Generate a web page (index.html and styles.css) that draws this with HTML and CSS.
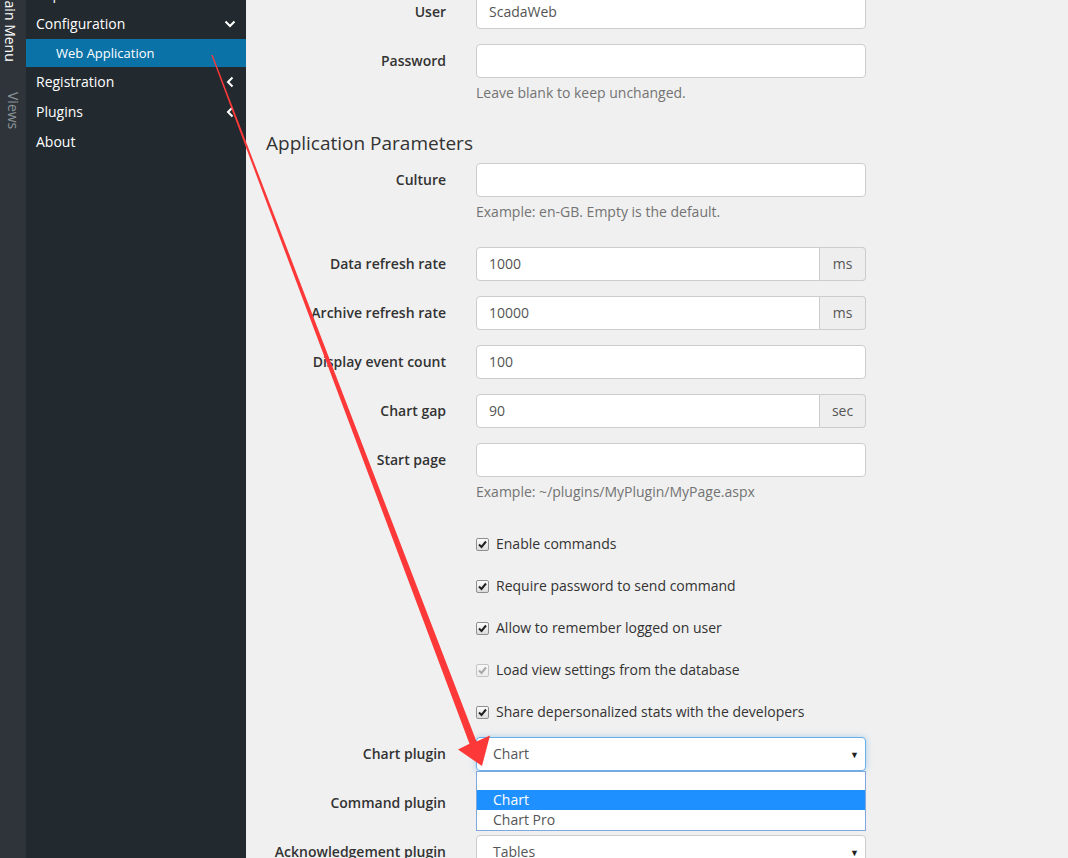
FILE: index.html
```html
<!DOCTYPE html>
<html>
<head>
<meta charset="utf-8">
<link rel="stylesheet" href="styles.css">
</head>
<body>
<div class="page">
  <div class="strip">
    <div class="strip-inner">
      <div class="tab tab-main">Main Menu</div>
      <div class="tab tab-views">Views</div>
    </div>
  </div>
  <nav class="sidebar">
    <ul class="menu">
      <li class="item">Reports</li>
      <li class="item">Configuration
        <svg class="chev" width="12" height="12" viewBox="0 0 12 12"><path d="M1.5 3.5 L6 8 L10.5 3.5" fill="none" stroke="#fff" stroke-width="2"/></svg>
      </li>
      <li class="sub active">Web Application</li>
      <li class="item">Registration
        <svg class="chev" width="12" height="12" viewBox="0 0 12 12"><path d="M8.5 1.5 L4 6 L8.5 10.5" fill="none" stroke="#fff" stroke-width="2"/></svg>
      </li>
      <li class="item">Plugins
        <svg class="chev" width="12" height="12" viewBox="0 0 12 12"><path d="M8.5 1.5 L4 6 L8.5 10.5" fill="none" stroke="#fff" stroke-width="2"/></svg>
      </li>
      <li class="item">About</li>
    </ul>
  </nav>
  <main class="main">
    <form class="form">
      <div class="group">
        <label class="label">User</label>
        <div class="control"><div class="input">ScadaWeb</div></div>
      </div>
      <div class="group">
        <label class="label">Password</label>
        <div class="control"><div class="input"></div><div class="help">Leave blank to keep unchanged.</div></div>
      </div>

      <h3 class="heading">Application Parameters</h3>

      <div class="group">
        <label class="label">Culture</label>
        <div class="control"><div class="input"></div><div class="help">Example: en-GB. Empty is the default.</div></div>
      </div>
      <div class="group">
        <label class="label">Data refresh rate</label>
        <div class="control"><div class="input-group"><div class="input grp">1000</div><div class="addon">ms</div></div></div>
      </div>
      <div class="group">
        <label class="label">Archive refresh rate</label>
        <div class="control"><div class="input-group"><div class="input grp">10000</div><div class="addon">ms</div></div></div>
      </div>
      <div class="group">
        <label class="label">Display event count</label>
        <div class="control"><div class="input">100</div></div>
      </div>
      <div class="group">
        <label class="label">Chart gap</label>
        <div class="control"><div class="input-group"><div class="input grp">90</div><div class="addon">sec</div></div></div>
      </div>
      <div class="group">
        <label class="label">Start page</label>
        <div class="control"><div class="input"></div><div class="help">Example: ~/plugins/MyPlugin/MyPage.aspx</div></div>
      </div>

      <div class="check-row">
        <span class="cb"><svg width="13" height="13" viewBox="0 0 13 13"><path d="M3 6.5 L5.5 9 L10 3.5" fill="none" stroke="#222" stroke-width="2"/></svg></span>
        <span>Enable commands</span>
      </div>
      <div class="check-row">
        <span class="cb"><svg width="13" height="13" viewBox="0 0 13 13"><path d="M3 6.5 L5.5 9 L10 3.5" fill="none" stroke="#222" stroke-width="2"/></svg></span>
        <span>Require password to send command</span>
      </div>
      <div class="check-row">
        <span class="cb"><svg width="13" height="13" viewBox="0 0 13 13"><path d="M3 6.5 L5.5 9 L10 3.5" fill="none" stroke="#222" stroke-width="2"/></svg></span>
        <span>Allow to remember logged on user</span>
      </div>
      <div class="check-row">
        <span class="cb disabled"><svg width="13" height="13" viewBox="0 0 13 13"><path d="M3 6.5 L5.5 9 L10 3.5" fill="none" stroke="#a8a8a8" stroke-width="2"/></svg></span>
        <span>Load view settings from the database</span>
      </div>
      <div class="check-row">
        <span class="cb"><svg width="13" height="13" viewBox="0 0 13 13"><path d="M3 6.5 L5.5 9 L10 3.5" fill="none" stroke="#222" stroke-width="2"/></svg></span>
        <span>Share depersonalized stats with the developers</span>
      </div>

      <div class="group">
        <label class="label">Chart plugin</label>
        <div class="control dd-host">
          <div class="input select focus">Chart<span class="caret">&#9660;</span></div>
          <ul class="dropdown">
            <li class="opt">&nbsp;</li>
            <li class="opt sel">Chart</li>
            <li class="opt">Chart Pro</li>
          </ul>
        </div>
      </div>
      <div class="group">
        <label class="label">Command plugin</label>
        <div class="control"><div class="input select"><span class="caret">&#9660;</span></div></div>
      </div>
      <div class="group">
        <label class="label">Acknowledgement plugin</label>
        <div class="control"><div class="input select">Tables<span class="caret">&#9660;</span></div></div>
      </div>
    </form>
  </main>
  <svg class="annot" width="1068" height="858" viewBox="0 0 1068 858">
    <polygon points="211.3,55 212.7,55 476.5,741.5 490,735.5 482,766 458,749.5 469.5,743.8" fill="#fc3838"/>
  </svg>
</div>
</body>
</html>
```
FILE: styles.css
```css
html, body {
  margin: 0;
  padding: 0;
  height: 100%;
  overflow: hidden;
}
body {
  font-family: "Open Sans", "Liberation Sans", sans-serif;
  font-size: 14px;
  line-height: 20px;
  color: #333;
  background: #f0f0f0;
}
.page {
  position: relative;
  display: flex;
  height: 858px;
  width: 1068px;
  overflow: hidden;
}
.strip {
  width: 26px;
  flex: none;
  background: #2e3439;
  overflow: hidden;
}
.strip-inner {
  margin-top: -12px;
  display: flex;
  flex-direction: column;
  align-items: center;
}
.tab {
  writing-mode: vertical-rl;
  font-size: 14px;
  line-height: 20px;
  white-space: nowrap;
}
.tab-main {
  color: #fff;
  padding-bottom: 15px;
  margin-left: -6px;
}
.tab-views {
  color: #8b949a;
  padding-top: 15px;
  font-size: 14px;
}
.sidebar {
  width: 220px;
  flex: none;
  background: #222a2f;
}
.menu {
  list-style: none;
  margin: -21px 0 0 0;
  padding: 0;
}
.item {
  height: 30px;
  line-height: 30px;
  padding-left: 10px;
  color: #fff;
  display: flex;
  align-items: center;
  justify-content: space-between;
  padding-right: 10px;
}
.chev {
  flex: none;
}
.sub {
  height: 28px;
  line-height: 28px;
  padding-left: 30px;
  font-size: 13px;
  color: #fff;
}
.active {
  background: #0b72a8;
}
.main {
  flex: 1;
  padding: 0 20px;
}
.form {
  margin-top: -5px;
  width: 600px;
}
.group {
  display: flex;
  margin-bottom: 15px;
}
.label {
  width: 180px;
  flex: none;
  text-align: right;
  padding-top: 7px;
  font-weight: 600;
  line-height: 20px;
  margin-right: 30px;
  white-space: nowrap;
}
.control {
  width: 390px;
  flex: none;
}
.input {
  box-sizing: border-box;
  height: 34px;
  padding: 6px 12px;
  border: 1px solid #ccc;
  border-radius: 4px;
  background: #fff;
  color: #555;
  line-height: 20px;
}
.help {
  margin: 5px 0 10px;
  color: #737373;
  line-height: 20px;
}
.heading {
  margin: 0 0 9px;
  padding-top: 4px;
  font-size: 19px;
  line-height: 22px;
  font-weight: 400;
  color: #333;
}
.input-group {
  display: flex;
}
.input.grp {
  flex: 1;
  border-radius: 4px 0 0 4px;
}
.addon {
  box-sizing: border-box;
  width: 46px;
  height: 34px;
  border: 1px solid #ccc;
  border-left: 0;
  border-radius: 0 4px 4px 0;
  background: #eee;
  color: #555;
  text-align: center;
  line-height: 32px;
}
.check-row {
  display: flex;
  align-items: center;
  margin-left: 210px;
  padding-top: 7px;
  height: 20px;
  margin-bottom: 15px;
  color: #333;
}
.cb {
  box-sizing: border-box;
  width: 13px;
  height: 13px;
  border: 1px solid #8e8e8e;
  border-radius: 2px;
  background: linear-gradient(#fdfdfd, #dcdcdc);
  margin-right: 7px;
  display: flex;
  align-items: center;
  justify-content: center;
  overflow: hidden;
}
.cb svg {
  flex: none;
}
.cb.disabled {
  border-color: #c4c4c4;
  background: linear-gradient(#f8f8f8, #ececec);
}
.select {
  position: relative;
  padding-left: 16px;
}
.caret {
  position: absolute;
  right: 6px;
  top: 7px;
  font-size: 9px;
  color: #222;
}
.focus {
  border-color: #66afe9;
  box-shadow: 0 0 6px rgba(102, 175, 233, 0.5);
}
.dd-host {
  position: relative;
}
.dropdown {
  position: absolute;
  left: 0;
  top: 34px;
  box-sizing: border-box;
  width: 390px;
  margin: 0;
  padding: 0;
  list-style: none;
  border: 1px solid #7fa9de;
  background: #fff;
  z-index: 5;
}
.opt {
  height: 20px;
  line-height: 20px;
  padding-left: 16px;
  color: #555;
}
.opt:first-child {
  height: 18px;
}
.opt.sel {
  background: #1e90ff;
  color: #fff;
}
.annot {
  position: absolute;
  left: 0;
  top: 0;
  pointer-events: none;
  z-index: 10;
}
```
